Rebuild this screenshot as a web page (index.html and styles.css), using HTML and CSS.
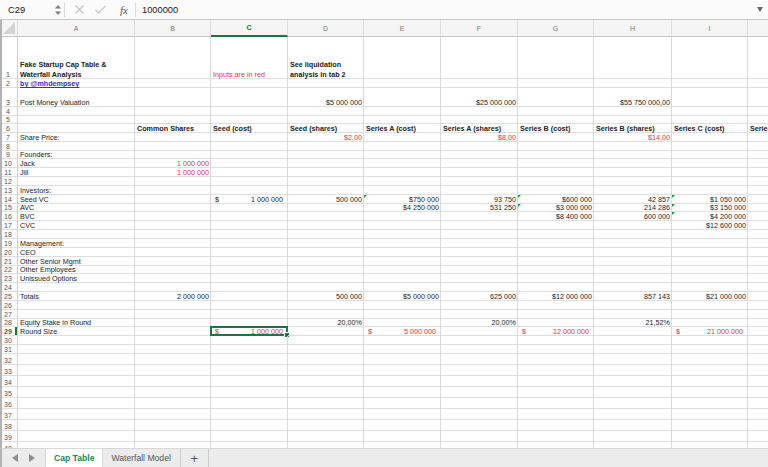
FILE: index.html
```html
<!DOCTYPE html>
<html>
<head>
<meta charset="utf-8">
<link rel="stylesheet" href="styles.css">
</head>
<body>
<div class="fbar">
  <div class="namebox">C29</div>
  <svg class="spin" width="6" height="12" viewBox="0 0 6 12"><polygon points="3,1 6,4.5 0,4.5" fill="#7d7d7d"/><polygon points="0,7.5 6,7.5 3,11" fill="#7d7d7d"/></svg>
  <div class="fsep"></div>
  <svg class="ico-x" width="9" height="9" viewBox="0 0 9 9"><path d="M0.5 0.5 L8.5 8.5 M8.5 0.5 L0.5 8.5" stroke="#c4c4c4" stroke-width="1.2"/></svg>
  <svg class="ico-ok" width="11" height="9" viewBox="0 0 11 9"><path d="M0.5 5 L3.8 8 L10.5 0.8" stroke="#c4c4c4" stroke-width="1.2" fill="none"/></svg>
  <div class="fx">fx</div>
  <div class="fsep"></div>
  <div class="fval">1000000</div>
  <svg class="caret" width="6" height="5" viewBox="0 0 6 5"><polygon points="0,0 6,0 3,5" fill="#6a6a6a"/></svg>
</div>

<div class="sheet">
  <div class="row hdr">
    <div class="corner"><svg width="12" height="12" viewBox="0 0 12 12"><polygon points="12,0 12,12 0,12" fill="#d4d4d4"/></svg></div>
    <div>A</div><div>B</div><div class="on">C</div><div>D</div><div>E</div><div>F</div><div>G</div><div>H</div><div>I</div><div>J</div>
  </div>
  <div class="row h42 multi">
    <div class="rh">1</div>
    <div class="b"><span>Fake Startup Cap Table &amp;<br>Waterfall Analysis</span></div>
    <div></div>
    <div class="red"><span>Inputs are in red</span></div>
    <div class="b"><span>See liquidation<br>analysis in tab 2</span></div>
    <div></div><div></div><div></div><div></div><div></div><div></div>
  </div>
  <div class="row h9">
    <div class="rh">2</div>
    <div><span class="link">by @mhdempsey</span></div>
    <div></div><div></div><div></div><div></div><div></div><div></div><div></div><div></div><div></div>
  </div>
  <div class="row h19">
    <div class="rh">3</div>
    <div>Post Money Valuation</div>
    <div></div><div></div>
    <div class="r">$5 000 000</div>
    <div></div>
    <div class="r">$25 000 000</div>
    <div></div>
    <div class="r">$55 750 000,00</div>
    <div></div><div></div>
  </div>
  <div class="row h9">
    <div class="rh">4</div><div></div><div></div><div></div><div></div><div></div><div></div><div></div><div></div><div></div><div></div>
  </div>
  <div class="row h8">
    <div class="rh">5</div><div></div><div></div><div></div><div></div><div></div><div></div><div></div><div></div><div></div><div></div>
  </div>
  <div class="row">
    <div class="rh">6</div>
    <div></div>
    <div class="b">Common Shares</div>
    <div class="b">Seed (cost)</div>
    <div class="b">Seed (shares)</div>
    <div class="b">Series A (cost)</div>
    <div class="b">Series A (shares)</div>
    <div class="b">Series B (cost)</div>
    <div class="b">Series B (shares)</div>
    <div class="b">Series C (cost)</div>
    <div class="b">Series C (shares)</div>
  </div>
  <div class="row">
    <div class="rh">7</div>
    <div>Share Price:</div>
    <div></div><div></div>
    <div class="r red">$2,00</div>
    <div></div>
    <div class="r red">$8,00</div>
    <div></div>
    <div class="r red">$14,00</div>
    <div></div><div></div>
  </div>
  <div class="row">
    <div class="rh">8</div><div></div><div></div><div></div><div></div><div></div><div></div><div></div><div></div><div></div><div></div>
  </div>
  <div class="row">
    <div class="rh">9</div><div>Founders:</div><div></div><div></div><div></div><div></div><div></div><div></div><div></div><div></div><div></div>
  </div>
  <div class="row">
    <div class="rh">10</div><div>Jack</div><div class="r red">1 000 000</div><div></div><div></div><div></div><div></div><div></div><div></div><div></div><div></div>
  </div>
  <div class="row">
    <div class="rh">11</div><div>Jill</div><div class="r red">1 000 000</div><div></div><div></div><div></div><div></div><div></div><div></div><div></div><div></div>
  </div>
  <div class="row">
    <div class="rh">12</div><div></div><div></div><div></div><div></div><div></div><div></div><div></div><div></div><div></div><div></div>
  </div>
  <div class="row">
    <div class="rh">13</div><div>Investors:</div><div></div><div></div><div></div><div></div><div></div><div></div><div></div><div></div><div></div>
  </div>
  <div class="row">
    <div class="rh">14</div>
    <div>Seed VC</div>
    <div></div>
    <div class="acc"><span>$</span><span>1 000 000</span></div>
    <div class="r">500 000</div>
    <div class="r w">$750 000</div>
    <div class="r">93 750</div>
    <div class="r w">$600 000</div>
    <div class="r">42 857</div>
    <div class="r w">$1 050 000</div>
    <div></div>
  </div>
  <div class="row">
    <div class="rh">15</div>
    <div>AVC</div>
    <div></div><div></div><div></div>
    <div class="r">$4 250 000</div>
    <div class="r">531 250</div>
    <div class="r w">$3 000 000</div>
    <div class="r">214 286</div>
    <div class="r w">$3 150 000</div>
    <div></div>
  </div>
  <div class="row">
    <div class="rh">16</div>
    <div>BVC</div>
    <div></div><div></div><div></div><div></div><div></div>
    <div class="r">$8 400 000</div>
    <div class="r">600 000</div>
    <div class="r w">$4 200 000</div>
    <div></div>
  </div>
  <div class="row">
    <div class="rh">17</div>
    <div>CVC</div>
    <div></div><div></div><div></div><div></div><div></div><div></div><div></div>
    <div class="r">$12 600 000</div>
    <div></div>
  </div>
  <div class="row">
    <div class="rh">18</div><div></div><div></div><div></div><div></div><div></div><div></div><div></div><div></div><div></div><div></div>
  </div>
  <div class="row">
    <div class="rh">19</div><div>Management:</div><div></div><div></div><div></div><div></div><div></div><div></div><div></div><div></div><div></div>
  </div>
  <div class="row">
    <div class="rh">20</div><div>CEO</div><div></div><div></div><div></div><div></div><div></div><div></div><div></div><div></div><div></div>
  </div>
  <div class="row">
    <div class="rh">21</div><div>Other Senior Mgmt</div><div></div><div></div><div></div><div></div><div></div><div></div><div></div><div></div><div></div>
  </div>
  <div class="row">
    <div class="rh">22</div><div>Other Employees</div><div></div><div></div><div></div><div></div><div></div><div></div><div></div><div></div><div></div>
  </div>
  <div class="row">
    <div class="rh">23</div><div>Unissued Options</div><div></div><div></div><div></div><div></div><div></div><div></div><div></div><div></div><div></div>
  </div>
  <div class="row">
    <div class="rh">24</div><div></div><div></div><div></div><div></div><div></div><div></div><div></div><div></div><div></div><div></div>
  </div>
  <div class="row">
    <div class="rh">25</div>
    <div>Totals</div>
    <div class="r">2 000 000</div>
    <div></div>
    <div class="r">500 000</div>
    <div class="r">$5 000 000</div>
    <div class="r">625 000</div>
    <div class="r">$12 000 000</div>
    <div class="r">857 143</div>
    <div class="r">$21 000 000</div>
    <div></div>
  </div>
  <div class="row">
    <div class="rh">26</div><div></div><div></div><div></div><div></div><div></div><div></div><div></div><div></div><div></div><div></div>
  </div>
  <div class="row">
    <div class="rh">27</div><div></div><div></div><div></div><div></div><div></div><div></div><div></div><div></div><div></div><div></div>
  </div>
  <div class="row">
    <div class="rh">28</div>
    <div>Equity Stake in Round</div>
    <div></div><div></div>
    <div class="r">20,00%</div>
    <div></div>
    <div class="r">20,00%</div>
    <div></div>
    <div class="r">21,52%</div>
    <div></div><div></div>
  </div>
  <div class="row">
    <div class="rh act">29</div>
    <div>Round Size</div>
    <div></div>
    <div class="acc red sel"><span>$</span><span>1 000 000</span></div>
    <div></div>
    <div class="acc red"><span>$</span><span>5 000 000</span></div>
    <div></div>
    <div class="acc red"><span>$</span><span>12 000 000</span></div>
    <div></div>
    <div class="acc red"><span>$</span><span>21 000 000</span></div>
    <div></div>
  </div>
  <div class="row">
    <div class="rh">30</div><div></div><div></div><div></div><div></div><div></div><div></div><div></div><div></div><div></div><div></div>
  </div>
  <div class="row">
    <div class="rh">31</div><div></div><div></div><div></div><div></div><div></div><div></div><div></div><div></div><div></div><div></div>
  </div>
  <div class="row h11">
    <div class="rh">32</div><div></div><div></div><div></div><div></div><div></div><div></div><div></div><div></div><div></div><div></div>
  </div>
  <div class="row h11">
    <div class="rh">33</div><div></div><div></div><div></div><div></div><div></div><div></div><div></div><div></div><div></div><div></div>
  </div>
  <div class="row h11">
    <div class="rh">34</div><div></div><div></div><div></div><div></div><div></div><div></div><div></div><div></div><div></div><div></div>
  </div>
  <div class="row h11">
    <div class="rh">35</div><div></div><div></div><div></div><div></div><div></div><div></div><div></div><div></div><div></div><div></div>
  </div>
  <div class="row h11">
    <div class="rh">36</div><div></div><div></div><div></div><div></div><div></div><div></div><div></div><div></div><div></div><div></div>
  </div>
  <div class="row h11">
    <div class="rh">37</div><div></div><div></div><div></div><div></div><div></div><div></div><div></div><div></div><div></div><div></div>
  </div>
  <div class="row h11">
    <div class="rh">38</div><div></div><div></div><div></div><div></div><div></div><div></div><div></div><div></div><div></div><div></div>
  </div>
  <div class="row h11">
    <div class="rh">39</div><div></div><div></div><div></div><div></div><div></div><div></div><div></div><div></div><div></div><div></div>
  </div>
  <div class="row h11">
    <div class="rh">40</div><div></div><div></div><div></div><div></div><div></div><div></div><div></div><div></div><div></div><div></div>
  </div>
</div>

<div class="tabs">
  <div class="nav">
    <svg width="6" height="8" viewBox="0 0 6 8"><polygon points="6,0 6,8 0,4" fill="#8e8e8e"/></svg>
    <svg width="6" height="8" viewBox="0 0 6 8"><polygon points="0,0 0,8 6,4" fill="#8e8e8e"/></svg>
  </div>
  <div class="tab active">Cap Table</div>
  <div class="tab">Waterfall Model</div>
  <div class="plus">+</div>
</div>
</body>
</html>
```

FILE: styles.css
```css
html, body {
  margin: 0;
  padding: 0;
}
body {
  width: 768px;
  height: 467px;
  overflow: hidden;
  background: #ffffff;
  color: #222222;
  font-family: "Liberation Sans", Arial, sans-serif;
}

/* formula bar */
.fbar {
  height: 20px;
  box-sizing: border-box;
  border-bottom: 1px solid #c8c8c8;
  background: #fbfbfb;
  display: flex;
  align-items: center;
}
.namebox {
  width: 47px;
  padding-left: 8px;
  font-size: 9.3px;
  color: #222;
}
.spin {
  margin-left: 0;
}
.fsep {
  width: 1px;
  height: 14px;
  background: #dcdcdc;
  margin-left: 3px;
}
.ico-x {
  margin-left: 10px;
}
.ico-ok {
  margin-left: 11px;
}
.fx {
  margin-left: 14px;
  font-family: "Liberation Serif", "Times New Roman", serif;
  font-style: italic;
  font-size: 11px;
  color: #555;
  width: 12px;
}
.fx + .fsep {
  margin-left: 3px;
}
.fval {
  margin-left: 6px;
  font-size: 9.3px;
  color: #222;
  flex: 1;
}
.caret {
  margin-right: 5px;
}

/* sheet */
.sheet {
  height: 428px;
  overflow: hidden;
  border-left: 2px solid #b3b3b3;
}
.row {
  display: grid;
  grid-template-columns: 16px 117px 76px 77px 76px 77px 77px 76px 78px 76px 77px;
  height: 8.846px;
  font-size: 7.2px;
  line-height: 7px;
}
.row > div {
  box-sizing: border-box;
  border-right: 1px solid #d9d9d9;
  border-bottom: 1px solid #dedede;
  display: flex;
  align-items: flex-end;
  padding: 0 2px;
  white-space: nowrap;
  position: relative;
  min-width: 0;
}
.row.hdr {
  height: 17px;
}
.row.h42 { height: 42px; }
.row.h19 { height: 19px; }
.row.h9 { height: 9px; }
.row.h8 { height: 8px; }
.row.h11 { height: 11px; }

.hdr > div {
  justify-content: center;
  align-items: center;
  background: #f5f5f5;
  color: #777;
  font-size: 7px;
  border-right-color: #dedede;
  border-bottom: 1px solid #c6c6c6;
}
.hdr > .on {
  color: #1f7244;
  font-weight: bold;
  border-bottom: 2px solid #1f7244;
}
.hdr > .corner {
  align-items: flex-end;
  justify-content: flex-end;
  padding: 0 2px 2px 0;
}

.row > .rh {
  justify-content: center;
  padding: 0 3px 0 0;
  color: #555;
  font-size: 7px;
  border-right-color: #cfcfcf;
}
.row > .rh.act {
  color: #1f7244;
  font-weight: bold;
  box-shadow: inset -2px 0 0 #1f7244;
}

.multi > div {
  line-height: 10px;
}
.multi > div > span {
  margin-bottom: -2px;
}
.multi > .rh {
  line-height: 7px;
}

.b { font-weight: bold; }
.red { color: #e2343e; }
.row > .r {
  justify-content: flex-end;
  padding-right: 1px;
}
.row > .acc {
  justify-content: space-between;
  padding: 0 4px 0 4px;
}
.link {
  color: #3b2fd2;
  font-weight: bold;
  text-decoration: underline;
}

.w::before {
  content: "";
  position: absolute;
  left: 0;
  top: 0;
  border-style: solid;
  border-width: 3px 3px 0 0;
  border-color: #1f9a3a transparent transparent transparent;
}

.sel::before {
  content: "";
  position: absolute;
  left: -1px;
  top: -1px;
  right: -1px;
  bottom: -1px;
  border: 2px solid #217346;
  box-sizing: border-box;
}
.sel::after {
  content: "";
  position: absolute;
  right: -3px;
  bottom: -3px;
  width: 4px;
  height: 4px;
  background: #217346;
  border: 1px solid #ffffff;
  box-sizing: content-box;
}

/* tabs */
.tabs {
  height: 19px;
  box-sizing: border-box;
  background: #ececec;
  border-top: 1px solid #d6d6d6;
  border-left: 2px solid #b3b3b3;
  display: flex;
  align-items: stretch;
  font-size: 8.6px;
  color: #555;
}
.nav {
  width: 44px;
  display: flex;
  align-items: center;
  gap: 11px;
  padding-left: 10px;
  box-sizing: border-box;
}
.tab {
  display: flex;
  align-items: center;
  padding: 0 9px 0 9px;
  border-right: 1px solid #cdcdcd;
}
.tab.active {
  background: #ffffff;
  color: #23865a;
  font-weight: bold;
  padding: 0 8px;
  border-right: none;
  box-shadow: 0 0 0 1px #d8d8d8;
}
.plus {
  width: 27px;
  display: flex;
  align-items: center;
  justify-content: center;
  font-size: 13px;
  color: #555;
  border-right: 1px solid #cdcdcd;
}
```
